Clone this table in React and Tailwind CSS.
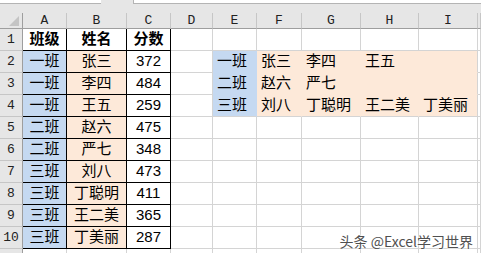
import React from "react";

const cols = ["A", "B", "C", "D", "E", "F", "G", "H", "I", ""];

const table = [
  ["班级", "姓名", "分数"],
  ["一班", "张三", "372"],
  ["一班", "李四", "484"],
  ["一班", "王五", "259"],
  ["二班", "赵六", "475"],
  ["二班", "严七", "348"],
  ["三班", "刘八", "473"],
  ["三班", "丁聪明", "411"],
  ["三班", "王二美", "365"],
  ["三班", "丁美丽", "287"],
];

// E2:I4 result block
const groups = {
  2: ["一班", "张三", "李四", "王五", ""],
  3: ["二班", "赵六", "严七", "", ""],
  4: ["三班", "刘八", "丁聪明", "王二美", "丁美丽"],
};

const grid = "grid grid-cols-[23px_44px_60px_44px_42px_44px_45px_59px_58px_59px_3px]";
const cellFont = "font-['Liberation_Sans','Noto_Sans_CJK_SC',sans-serif] text-[15px] text-black";

function Cell({ children, className = "" }) {
  return (
    <div className={`h-[22px] flex items-center border-r border-b ${className}`}>
      {children}
    </div>
  );
}

export default function App() {
  const rows = Array.from({ length: 11 }, (_, i) => i + 1);

  return (
    <div className="relative w-[481px] h-[253px] overflow-hidden bg-white">
      {/* name box + formula bar strip */}
      <div className="flex h-[13px] bg-[#e6e6e6]">
        <div className="w-[101px] h-[4px] bg-white border-b border-[#b4b4b4]" />
        <div className="ml-[32px] flex-1 h-[4px] bg-white border-b border-l border-[#b4b4b4]" />
      </div>

      {/* column headers */}
      <div className={`${grid} h-[16px]`}>
        <div className="relative bg-[#e6e6e6] border-r border-b border-[#9e9e9e]">
          <svg className="absolute right-[3px] bottom-[2px]" width="10" height="10" viewBox="0 0 10 10">
            <polygon points="10,0 10,10 0,10" fill="#c4c4c4" />
          </svg>
        </div>
        {cols.map((c, i) => (
          <div
            key={i}
            className="flex items-end justify-center bg-[#e6e6e6] border-r border-b border-r-[#c6c6c6] border-b-[#9e9e9e] font-['Liberation_Mono',monospace] text-[13px] leading-[15px] text-[#222]"
          >
            {c}
          </div>
        ))}
      </div>

      {/* sheet rows */}
      {rows.map((r) => {
        const data = table[r - 1];
        const grp = groups[r];
        return (
          <div key={r} className={grid}>
            <div className="h-[22px] flex items-center justify-center bg-[#e6e6e6] border-b border-r border-b-[#c6c6c6] border-r-[#9e9e9e] font-['Liberation_Mono',monospace] text-[13px] text-[#222]">
              {r <= 10 ? r : ""}
            </div>

            {data ? (
              <>
                <Cell className={`${cellFont} justify-center border-black ${r === 1 ? "font-bold bg-white" : "bg-[#c5d9f1]"}`}>
                  {data[0]}
                </Cell>
                <Cell className={`${cellFont} justify-center border-black ${r === 1 ? "font-bold bg-white" : "bg-[#fde9d9]"}`}>
                  {data[1]}
                </Cell>
                <Cell className={`${cellFont} justify-center border-black bg-white ${r === 1 ? "font-bold" : ""}`}>
                  {data[2]}
                </Cell>
              </>
            ) : (
              <>
                <Cell className="border-[#d4d4d4]" />
                <Cell className="border-[#d4d4d4]" />
                <Cell className="border-[#d4d4d4]" />
              </>
            )}

            <Cell className="border-[#d4d4d4]" />

            {grp ? (
              grp.map((v, j) => (
                <Cell
                  key={j}
                  className={`${cellFont} pl-[4px] ${j === 0 ? "bg-[#c5d9f1] border-[#c5d9f1]" : "bg-[#fde9d9] border-[#fde9d9]"} ${r === 4 ? "border-b-[#d4d4d4]" : ""} ${j === 4 ? "border-r-[#d4d4d4]" : ""}`}
                >
                  {v}
                </Cell>
              ))
            ) : (
              [0, 1, 2, 3, 4].map((j) => <Cell key={j} className="border-[#d4d4d4]" />)
            )}

            <Cell className="border-[#d4d4d4]" />
          </div>
        );
      })}

      {/* watermark */}
      <div className="absolute right-[8px] bottom-[5px] font-['Noto_Sans_CJK_SC',sans-serif] text-[14px] leading-none text-[#505050] [text-shadow:0_0_2px_#fff,0_0_2px_#fff]">
        头条 @Excel学习世界
      </div>
    </div>
  );
}
